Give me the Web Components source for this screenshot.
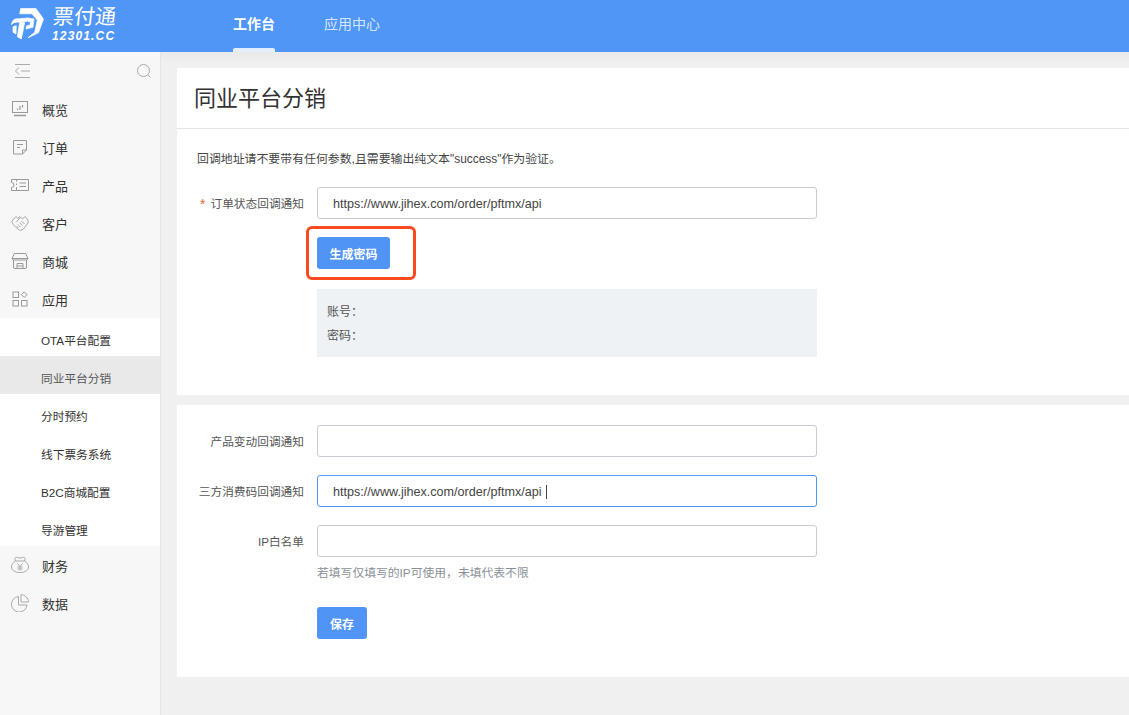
<!DOCTYPE html>
<html lang="zh">
<head>
<meta charset="utf-8">
<title>同业平台分销</title>
<style>
html,body{margin:0;height:100%;overflow:hidden;}
body{background:#f0f0f0;font-family:"Liberation Sans","Noto Sans CJK SC",sans-serif;font-size:12px;color:#333;}
.shell{display:flex;height:663px;}
</style>
</head>
<body>
<top-bar></top-bar>
<div class="shell">
  <side-nav>
    <nav-item label="概览"><svg viewBox="0 0 18 18" fill="none" stroke="#999"><rect x="1.500" y="1.500" width="15" height="11"/><path d="M3 15.500h12" stroke-width="1.500"/><path d="M6.500 10V8.500M9 10V6M11.500 7.500V5" stroke-width="1.200"/></svg></nav-item>
    <nav-item label="订单"><svg viewBox="0 0 18 18" fill="none" stroke="#999"><path d="M2.500 2.500h13v9.500l-4 4h-9zM15.500 12h-4v4M6 6.500h6M6 9.500h3"/></svg></nav-item>
    <nav-item label="产品"><svg viewBox="0 0 18 18" fill="none" stroke="#999"><path d="M.500 3.500h17v11H.500v-3a2.500 2.500 0 0 0 0-5zM5.500 4v1.500M5.500 7.500v1.500M5.500 11v3M8.500 7H15M8.500 10.500H15"/></svg></nav-item>
    <nav-item label="客户"><svg viewBox="0 0 18 18" fill="none" stroke="#aaa"><path d="M5 2.500 1 7c0 3 3.500 6.500 8 9.500l3.500-1.500 4.500-6V6l-3-3.500-2.500 2.500-3-2.500-1.500 2zM5.500 8 9 3.500M7.500 14l-2-2M9.500 13l-2.500-2.500M11.500 11.500 9 9M13.500 10 10.500 7"/></svg></nav-item>
    <nav-item label="商城"><svg viewBox="0 0 18 18" fill="none" stroke="#999"><path d="M3.500 1.500h11L17 6.500c0 1-1 1.500-2 1.500H3C2 8 1 7.500 1 6.500zM1 6.500h16M2.500 8v7a1.500 1.500 0 0 0 1.500 1.500h10a1.500 1.500 0 0 0 1.500-1.500V8M6 16.500V11.500h6v5M6 14h6"/></svg></nav-item>
    <nav-item label="应用"><svg viewBox="0 0 18 18" fill="none" stroke="#999"><rect x="2" y="2" width="5.500" height="5.500"/><rect x="2" y="10.500" width="5.500" height="5.500"/><rect x="10.500" y="10.500" width="5.500" height="5.500"/><path d="M13.200 1.800 16 4.700l-2.800 2.800-2.800-2.800z"/></svg></nav-item>
    <sub-menu>
      <sub-item>OTA平台配置</sub-item>
      <sub-item active>同业平台分销</sub-item>
      <sub-item>分时预约</sub-item>
      <sub-item>线下票务系统</sub-item>
      <sub-item>B2C商城配置</sub-item>
      <sub-item>导游管理</sub-item>
    </sub-menu>
    <nav-item label="财务"><svg viewBox="0 0 18 18" fill="none" stroke="#aaa"><path d="M4.500 1.500c1.500-.5 3 .5 4.500.5s3-1 4.500-.5c1 .5.500 2.500 0 3.500 2.500 1.500 4 3.500 4 6 0 3.500-3.500 5.500-8.500 5.500S.500 14.500.500 11c0-2.500 1.500-4.500 4-6-.5-1-1-3 0-3.500zM4.500 5h9M6.500 7.500 9 10.500l2.500-3M9 10.500v4M6.500 11h5M6.500 13h5"/></svg></nav-item>
    <nav-item label="数据"><svg viewBox="0 0 18 18" fill="none" stroke="#aaa"><path d="M7.500 2.500a7.800 7.800 0 1 0 8.500 8.500H7.500zM10 .5c4 .3 7.200 3.500 7.500 7.500H10z"/></svg></nav-item>
  </side-nav>
  <main-area>
    <form-card heading="同业平台分销" style="height:327px">
      <p-note>回调地址请不要带有任何参数,且需要输出纯文本"success"作为验证。</p-note>
      <form-row label="订单状态回调通知" required value="https://www.jihex.com/order/pftmx/api" style="margin-top:20px"></form-row>
      <app-button marked style="margin:18px 0 0 140px">生成密码</app-button>
      <info-box style="margin:20px 0 0 140px"></info-box>
    </form-card>
    <form-card style="height:272px;margin-top:10px;padding-top:20px">
      <form-row label="产品变动回调通知"></form-row>
      <form-row label="三方消费码回调通知" value="https://www.jihex.com/order/pftmx/api" focused style="margin-top:18px"></form-row>
      <form-row label="IP白名单" style="margin-top:18px"></form-row>
      <hint-text>若填写仅填写的IP可使用，未填代表不限</hint-text>
      <app-button style="margin:26px 0 0 140px;--w:50px">保存</app-button>
    </form-card>
  </main-area>
</div>

<script>
class TopBar extends HTMLElement {
  constructor() {
    super();
    this.attachShadow({ mode: "open" });
    this.shadowRoot.innerHTML = `
      <style>
        :host{display:flex;height:52px;background:#4f96f6;color:#fff;align-items:stretch;position:relative;}
        .logo{width:233px;display:flex;align-items:center;padding-left:11px;box-sizing:border-box;gap:8px;}
        .logo svg{width:33px;height:32px;flex:none;margin-top:-4px;overflow:visible;}
        .words{display:flex;flex-direction:column;margin-top:-5px;}
        .cn{font:400 21px/22px "Noto Sans CJK SC",sans-serif;letter-spacing:0;transform:skewX(-6deg);transform-origin:left bottom;}
        .en{font:italic 700 12px/14px "Liberation Sans",sans-serif;letter-spacing:1.150px;margin-top:3px;}
        .tabs{display:flex;gap:49px;}
        .tab{position:relative;display:flex;align-items:center;font-size:14px;color:#d6e6fd;padding-bottom:7px;box-sizing:border-box;}
        .tab.on{color:#fff;font-weight:700;}
        .tab.on::after{content:"";position:absolute;left:0;right:0;bottom:0;height:4px;background:#e3eefd;border-radius:2px 2px 0 0;}
      </style>
      <div class="logo">
        <svg viewBox="0 0 33 32" fill="#fff" stroke="#fff" stroke-width=".7" stroke-linejoin="round">
          <path d="M9.700 .5H25l7.500 10.500-5 13.800-10.500 5 6.700-5.500 2.600-12.100L21 5.800 8.700 5.800z"/>
          <path d="M.300 16.700C1 13 3 11.200 4.300 11L17 10l-.7 3.300-11 1c-2 .3-3.500 1-5 2.400z"/>
          <path d="M17 10l6 1-1 8.300-7 1.700.5-3 3.500-1 .5-3-2.500-.5z"/>
          <path d="M8.700 14.300h5L10.300 31l-4-2.300z"/>
          <path d="M2 18.700l3.300-1L5 26l-3-1.700z"/>
        </svg>
        <div class="words"><span class="cn">票付通</span><span class="en">12301.CC</span></div>
      </div>
      <div class="tabs"><div class="tab on">工作台</div><div class="tab">应用中心</div></div>`;
  }
}
class SideNav extends HTMLElement {
  constructor() {
    super();
    this.attachShadow({ mode: "open" });
    this.shadowRoot.innerHTML = `
      <style>
        :host{display:block;width:161px;flex:none;box-sizing:border-box;background:#f7f7f7;border-right:1px solid #e4e4e4;}
        .tools{height:38px;display:flex;justify-content:space-between;align-items:center;padding:0 8px 0 14px;}
        svg{display:block;}
      </style>
      <div class="tools">
        <svg width="17" height="16" viewBox="0 0 17 16" fill="none" stroke="#aaa"><path d="M1 1.500h15M7 8h9M1 14.500h15M5 4.500 1.500 8 5 11.500"/></svg>
        <svg width="16" height="16" viewBox="0 0 16 16" fill="none" stroke="#aaa"><circle cx="7.500" cy="7.500" r="6"/><path d="m12 12 2.500 2.500"/></svg>
      </div>
      <slot></slot>`;
  }
}
class NavItem extends HTMLElement {
  constructor() {
    super();
    this.attachShadow({ mode: "open" });
    this.shadowRoot.innerHTML = `
      <style>
        :host{display:flex;height:38px;align-items:center;padding-left:11px;font-size:13px;color:#333;}
        ::slotted(svg){width:18px;height:18px;flex:none;}
        span{margin-left:13px;}
      </style>
      <slot></slot><span></span>`;
  }
  connectedCallback() {
    this.shadowRoot.querySelector("span").textContent = this.getAttribute("label");
  }
}
class SubMenu extends HTMLElement {
  constructor() {
    super();
    this.attachShadow({ mode: "open" });
    this.shadowRoot.innerHTML = `<style>:host{display:block;background:#fff;}</style><slot></slot>`;
  }
}
class SubItem extends HTMLElement {
  constructor() {
    super();
    this.attachShadow({ mode: "open" });
    this.shadowRoot.innerHTML = `
      <style>
        :host{display:flex;height:38px;box-sizing:border-box;padding:5px 0 0 41px;align-items:center;font-size:11.700px;color:#333;}
        :host([active]){background:#e9e9e9;color:#555;}
      </style><slot></slot>`;
  }
}
class MainArea extends HTMLElement {
  constructor() {
    super();
    this.attachShadow({ mode: "open" });
    this.shadowRoot.innerHTML = `<style>:host{display:block;flex:1;padding:16px 0 0 16px;min-width:0;background:linear-gradient(#e9e9e9,#f0f0f0 10px);}</style><slot></slot>`;
  }
}
class FormCard extends HTMLElement {
  constructor() {
    super();
    this.attachShadow({ mode: "open" });
    this.shadowRoot.innerHTML = `
      <style>
        :host{display:block;background:#fff;box-sizing:border-box;}
        h2{margin:0;height:61px;box-sizing:border-box;border-bottom:1px solid #e5e5e5;padding-left:17px;font:400 22px/62px "Liberation Sans","Noto Sans CJK SC",sans-serif;color:#333;}
        .body{display:flex;flex-direction:column;align-items:flex-start;}
        .head-gap{height:22px;}
      </style>
      <h2></h2><div class="head-gap"></div><div class="body"><slot></slot></div>`;
  }
  connectedCallback() {
    const heading = this.getAttribute("heading");
    if (heading) {
      this.shadowRoot.querySelector("h2").textContent = heading;
    } else {
      this.shadowRoot.querySelector("h2").remove();
      this.shadowRoot.querySelector(".head-gap").remove();
    }
  }
}
class PNote extends HTMLElement {
  constructor() {
    super();
    this.attachShadow({ mode: "open" });
    this.shadowRoot.innerHTML = `<style>:host{display:block;padding-left:20px;font-size:11.900px;line-height:16px;color:#444;}</style><slot></slot>`;
  }
}
class FormRow extends HTMLElement {
  constructor() {
    super();
    this.attachShadow({ mode: "open" });
    this.shadowRoot.innerHTML = `
      <style>
        :host{display:flex;align-items:center;height:32px;}
        label{width:127px;text-align:right;font-size:11.700px;color:#555;white-space:nowrap;margin:-1px 13px 0 0;}
        .star{color:#f0643c;margin-right:5px;font-size:14px;line-height:12px;vertical-align:-1px;}
        .field{width:500px;height:32px;box-sizing:border-box;border:1px solid #c9ccd3;border-radius:3px;padding:1px 0 0 15px;display:flex;align-items:center;font-size:12.600px;color:#444;}
        :host([focused]) .field{border-color:#4f96f6;}
        .caret{display:none;width:1px;height:14px;background:#444;margin-left:4px;}
        :host([focused]) .caret{display:block;}
      </style>
      <label><span class="star">*</span><span class="txt"></span></label>
      <div class="field"><span class="val"></span><i class="caret"></i></div>`;
  }
  connectedCallback() {
    const root = this.shadowRoot;
    root.querySelector(".txt").textContent = this.getAttribute("label");
    root.querySelector(".val").textContent = this.getAttribute("value") || "";
    if (!this.hasAttribute("required")) root.querySelector(".star").remove();
  }
}
class AppButton extends HTMLElement {
  constructor() {
    super();
    this.attachShadow({ mode: "open" });
    this.shadowRoot.innerHTML = `
      <style>
        :host{display:block;position:relative;}
        .btn{width:var(--w,73px);height:32px;background:#5095f5;border-radius:3px;color:#fff;font-size:12px;font-weight:700;display:flex;align-items:center;justify-content:center;}
        :host([marked])::after{content:"";position:absolute;left:-11px;top:-11px;width:104px;height:48px;border:3px solid #fb4a20;border-radius:6px;}
      </style>
      <div class="btn"><slot></slot></div>`;
  }
}
class InfoBox extends HTMLElement {
  constructor() {
    super();
    this.attachShadow({ mode: "open" });
    this.shadowRoot.innerHTML = `
      <style>
        :host{display:flex;flex-direction:column;justify-content:center;gap:8px;width:500px;height:68px;box-sizing:border-box;padding:2px 0 0 10px;background:#eff2f5;font-size:12px;line-height:16px;color:#555;}
      </style>
      <div>账号：</div><div>密码：</div>`;
  }
}
class HintText extends HTMLElement {
  constructor() {
    super();
    this.attachShadow({ mode: "open" });
    this.shadowRoot.innerHTML = `<style>:host{display:block;margin:8px 0 0 140px;font-size:11.800px;line-height:16px;color:#8a8f97;}</style><slot></slot>`;
  }
}
customElements.define("top-bar", TopBar);
customElements.define("side-nav", SideNav);
customElements.define("nav-item", NavItem);
customElements.define("sub-menu", SubMenu);
customElements.define("sub-item", SubItem);
customElements.define("main-area", MainArea);
customElements.define("form-card", FormCard);
customElements.define("p-note", PNote);
customElements.define("form-row", FormRow);
customElements.define("app-button", AppButton);
customElements.define("info-box", InfoBox);
customElements.define("hint-text", HintText);
</script>
</body>
</html>
